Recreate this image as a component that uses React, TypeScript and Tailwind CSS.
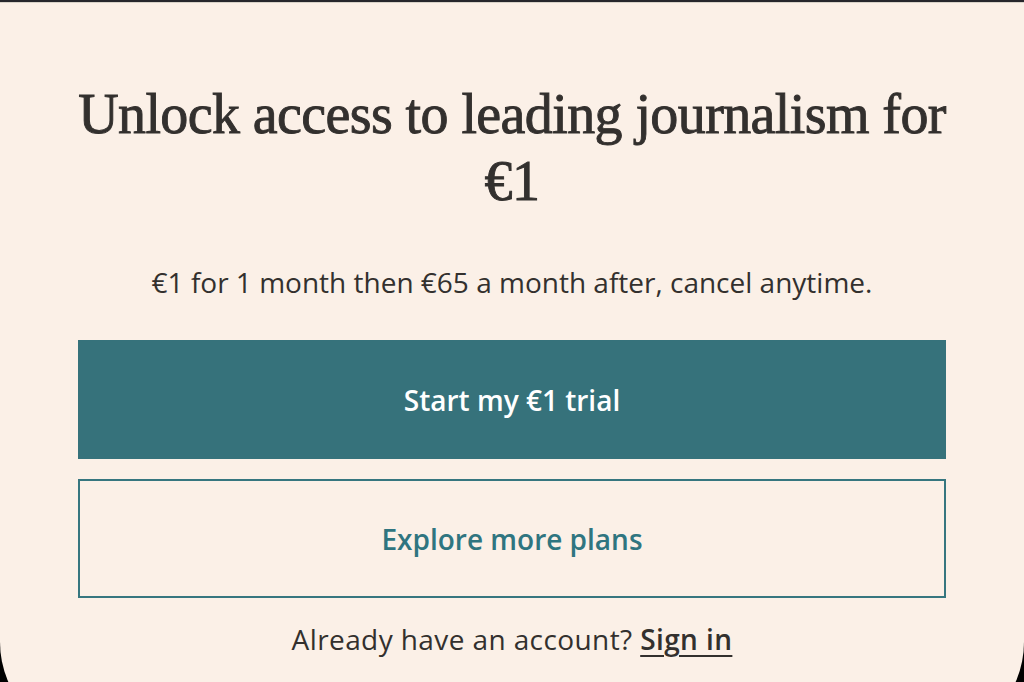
export default function App() {
  return (
    <div className="h-[682px] w-[1024px] overflow-hidden bg-black">
      <div className="h-[2px] bg-[#26262c]" />
      <div className="h-[740px] rounded-b-[100px] border-t border-[#d8d2c8] bg-[#fbf0e7] px-[78px] pt-[78px]">
        <h1
          className="text-center text-[56px] leading-[67px] tracking-[-0.6px] text-[#33302e] [-webkit-text-stroke:0.9px_#33302e]"
          style={{ fontFamily: '"Liberation Serif", serif' }}
        >
          Unlock access to leading journalism for €1
        </h1>
        <div style={{ fontFamily: '"Open Sans", sans-serif' }}>
          <p className="mt-[48px] text-center text-[28px] leading-[38px] text-[#33302e]">
            €1 for 1 month then €65 a month after, cancel anytime.
          </p>
          <button className="mt-[39px] flex h-[119px] w-full items-center justify-center bg-[#36727b] text-[28px] font-semibold text-white">
            Start my €1 trial
          </button>
          <button className="mt-[20px] flex h-[119px] w-full items-center justify-center border-2 border-[#36767f] text-[28px] font-semibold text-[#2f7580]">
            Explore more plans
          </button>
          <p className="mt-[22px] text-center text-[28px] leading-[38px] tracking-[0.4px] text-[#33302e]">
            Already have an account?{" "}
            <a href="#" className="font-semibold underline decoration-2 underline-offset-[5px]">
              Sign in
            </a>
          </p>
        </div>
      </div>
    </div>
  );
}
